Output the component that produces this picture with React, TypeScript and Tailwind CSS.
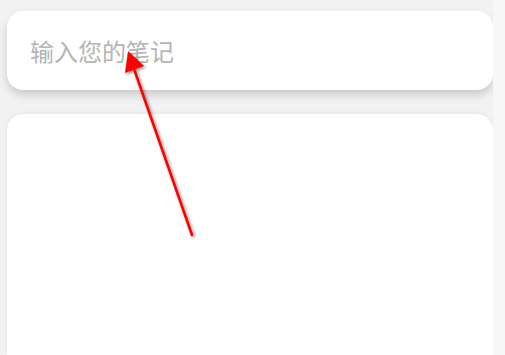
import React from 'react';

const App: React.FC = () => {
  return (
    <div
      className="relative flex h-[355px] w-[505px] overflow-hidden bg-[#f2f2f2]"
      style={{ fontFamily: '"Noto Sans CJK SC", "Noto Sans", sans-serif' }}
    >
      {/* Main column */}
      <div className="flex w-[493px] flex-col pl-[7px] pt-[11px]">
        <div className="flex h-[79px] items-center rounded-[16px] bg-white pl-[23px] shadow-[0_5px_9px_rgba(0,0,0,0.16)]">
          <input
            className="w-full bg-transparent text-[24px] text-[#222] outline-none placeholder:text-[#b4b4b4]"
            placeholder="输入您的笔记"
          />
        </div>
        <div className="mt-[24px] flex-1 rounded-t-[16px] bg-white shadow-[0_-1px_4px_rgba(0,0,0,0.06)]" />
      </div>

      {/* Scrollbar strip */}
      <div className="w-[12px] bg-[#f7f7f7]" />

      {/* Annotation arrow */}
      <svg className="pointer-events-none absolute left-0 top-0" width="505" height="355">
        <defs>
          <filter id="sh" x="-20%" y="-20%" width="140%" height="140%">
            <feDropShadow dx="1.5" dy="1.5" stdDeviation="1.5" floodColor="#000" floodOpacity="0.45" />
          </filter>
        </defs>
        <g filter="url(#sh)">
          <line x1="192" y1="235" x2="133" y2="66" stroke="#ff0000" strokeWidth="2.6" strokeLinecap="round" />
          <polygon points="128,51 125,73 144,66" fill="#ff0000" />
        </g>
      </svg>
    </div>
  );
};

export default App;
